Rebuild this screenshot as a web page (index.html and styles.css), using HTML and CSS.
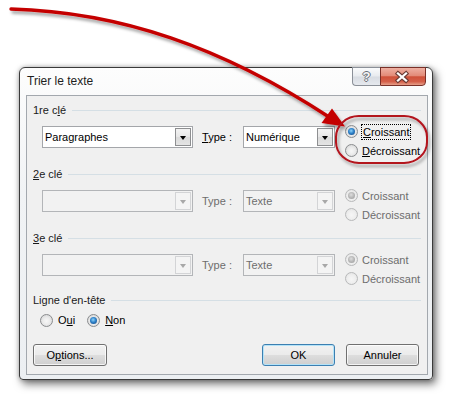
FILE: index.html
```html
<!DOCTYPE html>
<html lang="fr">
<head>
<meta charset="utf-8">
<title>Trier le texte</title>
<link rel="stylesheet" href="styles.css">
</head>
<body>
<div class="stage">
  <div class="dialog">
    <div class="titlebar">
      <span class="title">Trier le texte</span>
      <div class="caption-buttons">
        <span class="cap-help">?</span>
        <span class="cap-close">
          <svg width="46" height="18" viewBox="0 0 46 18">
            <path d="M19 5.5 L27 12.5 M27 5.5 L19 12.5" stroke="#6a3a34" stroke-width="4.4" stroke-linecap="square" fill="none"/>
            <path d="M19 5.5 L27 12.5 M27 5.5 L19 12.5" stroke="#ffffff" stroke-width="2.3" stroke-linecap="square" fill="none"/>
          </svg>
        </span>
      </div>
    </div>
    <div class="client">
      <div class="group-head first"><span>1re c<u>l</u>é</span><i class="sep"></i></div>
      <div class="key-row">
        <div class="combo wide"><span class="combo-text">Paragraphes</span><span class="combo-btn"><i class="tri"></i></span></div>
        <span class="type-label"><u>T</u>ype :</span>
        <div class="combo narrow"><span class="combo-text">Numérique</span><span class="combo-btn"><i class="tri"></i></span></div>
        <div class="order">
          <div class="radio-item"><span class="radio on"></span><span class="focus"><u>C</u>roissant</span></div>
          <div class="radio-item"><span class="radio"></span><span class="rtext"><u>D</u>écroissant</span></div>
        </div>
      </div>

      <div class="group-head"><span><u>2</u>e clé</span><i class="sep"></i></div>
      <div class="key-row disabled">
        <div class="combo wide"><span class="combo-text"></span><span class="combo-btn"><i class="tri"></i></span></div>
        <span class="type-label">Type :</span>
        <div class="combo narrow"><span class="combo-text">Texte</span><span class="combo-btn"><i class="tri"></i></span></div>
        <div class="order">
          <div class="radio-item"><span class="radio on"></span><span class="rtext">Croissant</span></div>
          <div class="radio-item"><span class="radio"></span><span class="rtext">Décroissant</span></div>
        </div>
      </div>

      <div class="group-head"><span><u>3</u>e clé</span><i class="sep"></i></div>
      <div class="key-row disabled">
        <div class="combo wide"><span class="combo-text"></span><span class="combo-btn"><i class="tri"></i></span></div>
        <span class="type-label">Type :</span>
        <div class="combo narrow"><span class="combo-text">Texte</span><span class="combo-btn"><i class="tri"></i></span></div>
        <div class="order">
          <div class="radio-item"><span class="radio on"></span><span class="rtext">Croissant</span></div>
          <div class="radio-item"><span class="radio"></span><span class="rtext">Décroissant</span></div>
        </div>
      </div>

      <div class="group-head header-line"><span>Ligne d'en-tête</span><i class="sep"></i></div>
      <div class="yesno">
        <div class="radio-item inline"><span class="radio"></span><span class="rtext">O<u>u</u>i</span></div>
        <div class="radio-item inline second"><span class="radio on"></span><span class="rtext"><u>N</u>on</span></div>
      </div>

      <div class="buttons">
        <span class="btn options">O<u>p</u>tions...</span>
        <span class="btn ok">OK</span>
        <span class="btn cancel">Annuler</span>
      </div>
    </div>
  </div>

  <svg class="annot" width="454" height="400" viewBox="0 0 454 400">
    <defs>
      <filter id="sh" x="-10%" y="-10%" width="130%" height="140%">
        <feDropShadow dx="2" dy="3" stdDeviation="1.6" flood-color="#000" flood-opacity="0.35"/>
      </filter>
    </defs>
    <g filter="url(#sh)">
      <path d="M11 9 C120 12 222 47 329 117" fill="none" stroke="#c40000" stroke-width="3.4" stroke-linecap="round"/>
      <path d="M345 126.5 L321.5 123 L332 108.5 Z" fill="#c40000"/>
      <rect x="336" y="116" width="91" height="47" rx="23" ry="21" fill="none" stroke="#b3121c" stroke-width="2"/>
    </g>
  </svg>
</div>
</body>
</html>
```

FILE: styles.css
```css
html, body {
  margin: 0;
  padding: 0;
  background: #ffffff;
}

body {
  font-family: "Liberation Sans", Arial, sans-serif;
  font-size: 11px;
  color: #000;
}

.stage {
  position: relative;
  width: 454px;
  height: 400px;
  padding: 67px 0 0 19px;
  box-sizing: border-box;
  overflow: hidden;
}

.dialog {
  width: 414px;
  height: 313px;
  box-sizing: border-box;
  border: 1px solid #3a3a3a;
  border-radius: 6px 6px 4px 4px;
  background: linear-gradient(#fdfdfd, #f1f3f5 40%, #eceff2);
  box-shadow: 3px 4px 9px rgba(0, 0, 0, 0.55), 0 0 4px rgba(0, 0, 0, 0.25);
}

.titlebar {
  height: 27px;
  display: flex;
  align-items: flex-start;
  padding-left: 7px;
}

.title {
  font-size: 12px;
  line-height: 27px;
  color: #1e1e1e;
}

.caption-buttons {
  margin-left: auto;
  margin-right: 6px;
  margin-top: -1px;
  display: flex;
}

.cap-help {
  width: 28px;
  height: 19px;
  box-sizing: border-box;
  border: 1px solid #8b9098;
  border-right: none;
  border-radius: 0 0 0 4px;
  background: linear-gradient(#fafbfc, #e8ebef 48%, #d8dce2 52%, #e6e9ee);
  text-align: center;
  font-size: 13px;
  font-weight: bold;
  line-height: 18px;
  color: #f4f4f4;
  text-shadow: 1px 0 0 #6a7078, -1px 0 0 #6a7078, 0 1px 0 #6a7078, 0 -1px 0 #6a7078;
}

.cap-close {
  width: 46px;
  height: 19px;
  box-sizing: border-box;
  border: 1px solid #7a3028;
  border-radius: 0 0 4px 0;
  background: linear-gradient(#eeb0a2, #e38b78 45%, #cf5139 52%, #d5604a 80%, #e6a08a);
  display: flex;
  align-items: center;
  justify-content: center;
}

.cap-close svg {
  display: block;
  margin-left: -2px;
}

.client {
  margin-left: 6px;
  width: 402px;
  height: 280px;
  box-sizing: border-box;
  border: 1px solid #a3a8ae;
  background: #f0f0f0;
  display: flex;
  flex-direction: column;
}

.group-head {
  display: flex;
  align-items: center;
  height: 14px;
  line-height: 14px;
  margin: 19px 6px 0 6px;
  color: #1a1a1a;
}

.group-head.first {
  margin-top: 7px;
}

.group-head.header-line {
  margin-top: 17px;
}

.sep {
  flex: 1;
  height: 1px;
  background: #d5dfe5;
  margin-left: 6px;
}

.key-row {
  display: flex;
  align-items: flex-start;
  height: 22px;
  margin-top: 9px;
  padding-left: 15px;
}

.combo {
  height: 22px;
  box-sizing: border-box;
  border: 1px solid #a4a6aa;
  background: #ffffff;
  display: flex;
  align-items: stretch;
}

.combo.wide {
  width: 151px;
}

.combo.narrow {
  width: 92px;
}

.combo-text {
  flex: 1;
  padding-left: 2px;
  line-height: 20px;
  white-space: nowrap;
  overflow: hidden;
}

.combo-btn {
  width: 16px;
  margin: 1px;
  box-sizing: border-box;
  border: 1px solid #8e8f91;
  background: linear-gradient(#f3f3f3, #e6e6e6 50%, #dadada 51%, #e4e4e4);
  display: flex;
  align-items: center;
  justify-content: center;
}

.tri {
  width: 0;
  height: 0;
  border-left: 3.5px solid transparent;
  border-right: 3.5px solid transparent;
  border-top: 4px solid #000;
  margin-top: 1px;
}

.type-label {
  width: 41px;
  margin-left: 9px;
  line-height: 22px;
  white-space: nowrap;
}

.order {
  margin-left: 10px;
  margin-top: -4px;
  display: flex;
  flex-direction: column;
}

.radio-item {
  height: 19px;
  display: flex;
  align-items: center;
  white-space: nowrap;
}

.radio {
  width: 13px;
  height: 13px;
  box-sizing: border-box;
  border-radius: 50%;
  border: 1px solid #8a8c8e;
  background: radial-gradient(circle at 50% 55%, #f7f7f7 0, #ececec 40%, #cfd0d1 100%);
  position: relative;
  flex: none;
}

.radio.on::after {
  content: "";
  position: absolute;
  left: 2px;
  top: 2px;
  width: 7px;
  height: 7px;
  border-radius: 50%;
  background: radial-gradient(circle at 45% 40%, #8fd4fa 0, #2f82c9 45%, #123f78 100%);
}

.rtext {
  margin-left: 4px;
  line-height: 14px;
}

.focus {
  margin-left: 3px;
  padding: 0 1px;
  line-height: 14px;
  border: 1px dotted #000;
}

.disabled .combo {
  background: #f2f2f2;
  border-color: #b3b5b8;
}

.disabled .combo-btn {
  border-color: #d3d4d6;
  background: #f4f4f4;
}

.disabled .tri {
  border-top-color: #a8a8a8;
}

.disabled .type-label,
.disabled .combo-text,
.disabled .rtext {
  color: #6d6d6d;
}

.disabled .radio {
  border-color: #b8b9ba;
  background: radial-gradient(circle at 50% 55%, #f6f6f6 0, #eeeeee 50%, #dddddd 100%);
}

.disabled .radio.on::after {
  background: radial-gradient(circle at 45% 40%, #dedede 0, #b4b4b4 55%, #9a9a9a 100%);
}

.yesno {
  display: flex;
  margin-top: 6px;
  padding-left: 13px;
  height: 14px;
  align-items: center;
}

.radio-item.inline {
  height: 14px;
}

.radio-item.inline .rtext {
  margin-left: 5px;
}

.radio-item.second {
  margin-left: 12px;
}

.buttons {
  display: flex;
  margin-top: 17px;
  padding: 0 8px 0 6px;
}

.btn {
  height: 22px;
  box-sizing: border-box;
  border: 1px solid #707070;
  border-radius: 3px;
  background: linear-gradient(#f2f2f2, #ebebeb 48%, #dddddd 52%, #cfcfcf);
  box-shadow: inset 0 0 0 1px rgba(255, 255, 255, 0.75);
  text-align: center;
  line-height: 20px;
  white-space: nowrap;
  color: #000;
}

.btn.options {
  width: 74px;
}

.btn.ok {
  width: 73px;
  margin-left: auto;
  border-color: #3c7fb1;
  box-shadow: inset 0 0 0 1px #b4e3f8;
}

.btn.cancel {
  width: 73px;
  margin-left: 11px;
}

.annot {
  position: absolute;
  left: 0;
  top: 0;
  pointer-events: none;
}
```
